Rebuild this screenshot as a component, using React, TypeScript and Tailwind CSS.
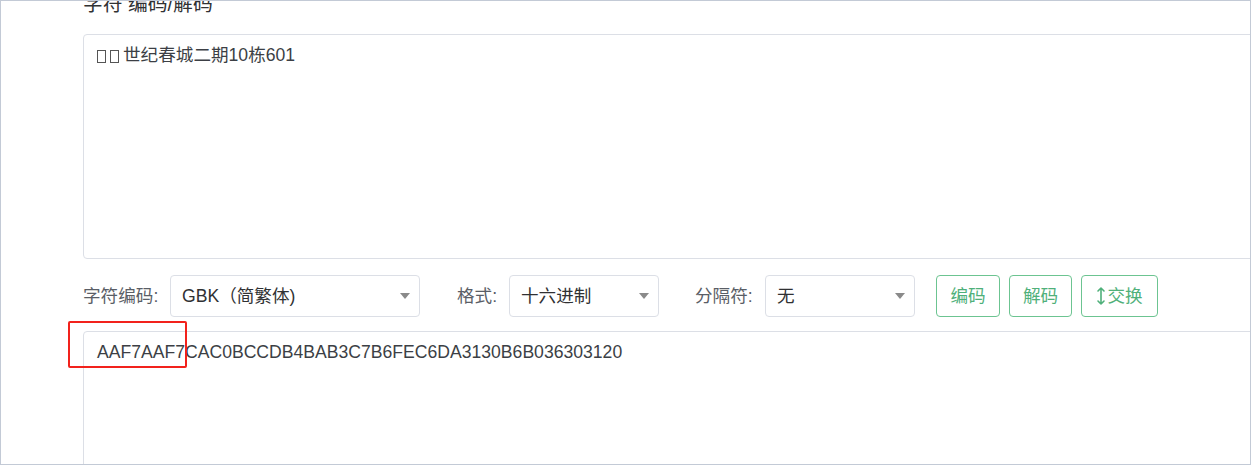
const font = { fontFamily: '"Liberation Sans", "Noto Sans CJK SC", sans-serif' };

function Select({ value, width }: { value: string; width: string }) {
  return (
    <div className={`${width} h-[42px] flex items-center justify-between border border-[#dcdfe6] rounded-[4px] pl-[11px] pr-[8px] text-[17.6px] text-[#303133]`}>
      <span>{value}</span>
      <span className="w-0 h-0 border-l-[5px] border-r-[5px] border-t-[6px] border-l-transparent border-r-transparent border-t-[#8a8a8a] mr-[1px]" />
    </div>
  );
}

function Btn({ children, width }: { children: React.ReactNode; width: string }) {
  return (
    <button className={`${width} h-[42px] flex items-center justify-center border border-[#6cc491] rounded-[4px] text-[17.6px] text-[#4fb07a] bg-white`}>
      {children}
    </button>
  );
}

function Tofu() {
  return <span className="inline-block w-[9px] h-[13px] border border-[#555] mr-[4px] align-[-2px]" />;
}

export default function App() {
  return (
    <div style={font} className="w-[1251px] h-[465px] border border-[#c3cad6] overflow-hidden bg-white">
      <div className="pl-[82px] w-[1300px]">
        {/* 标题 */}
        <div className="h-[33px]">
          <div className="-translate-y-[10px] text-[19.8px] leading-[26px] text-[#303133]">字符 编码/解码</div>
        </div>

        <div className="w-[1200px] h-[225px] border border-[#dcdfe6] rounded-[4px] px-[13px] pt-[7px] text-[17.6px] leading-[26px] text-[#3c3f45]">
          <Tofu />
          <Tofu />
          世纪春城二期10栋601
        </div>

        <div className="flex items-center mt-[16px] text-[17.6px] text-[#5a5e66]">
          <span className="w-[87px]">字符编码:</span>
          <Select value="GBK（简繁体)" width="w-[250px]" />
          <span className="ml-[37px] w-[52px]">格式:</span>
          <Select value="十六进制" width="w-[150px]" />
          <span className="ml-[36px] w-[70px]">分隔符:</span>
          <Select value="无" width="w-[150px]" />
          <div className="flex gap-[9px] ml-[21px]">
            <Btn width="w-[64px]">编码</Btn>
            <Btn width="w-[63px]">解码</Btn>
            <Btn width="w-[77px]">
              <svg width="10" height="20" viewBox="0 0 10 20" className="mr-[1px]" fill="none" stroke="#4fb07a" strokeWidth="1.6" strokeLinecap="round" strokeLinejoin="round">
                <path d="M5 2v16M2 5l3-3 3 3M2 15l3 3 3-3" />
              </svg>
              交换
            </Btn>
          </div>
        </div>

        <div className="relative mt-[14px]">
          <div className="w-[1200px] h-[200px] border border-[#dcdfe6] rounded-[4px] px-[13px] pt-[7px] text-[17.6px] leading-[26px] text-[#3c3f45]">
            AAF7AAF7CAC0BCCDB4BAB3C7B6FEC6DA3130B6B036303120
          </div>
          <div className="absolute left-[-15px] top-[-10px] w-[119px] h-[47px] border-2 border-[#f2221c] rounded-[2px]" />
        </div>
      </div>
    </div>
  );
}
